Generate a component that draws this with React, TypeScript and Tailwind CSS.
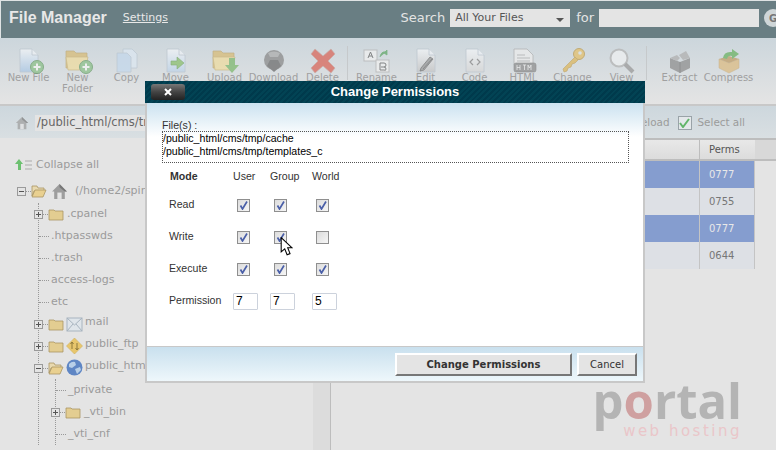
import React from 'react';

const verdana = "font-['DejaVu_Sans',sans-serif]";

function Page({ tint = '#a9c6e4', children }: { tint?: string; children?: React.ReactNode }) {
  return (
    <svg width="30" height="26" viewBox="0 0 30 26">
      <defs>
        <linearGradient id={`pg${tint.slice(1)}`} x1="0" y1="0" x2="0" y2="1">
          <stop offset="0" stopColor="#f4f6f8" />
          <stop offset="1" stopColor={tint} />
        </linearGradient>
      </defs>
      <path d="M6 1h12l6 6v17H6z" fill={`url(#pg${tint.slice(1)})`} stroke="#b8c2cb" strokeWidth="0.8" />
      <path d="M18 1v6h6" fill="#eef2f5" stroke="#b8c2cb" strokeWidth="0.8" />
      {children}
    </svg>
  );
}

function PlusBadge() {
  return (
    <g>
      <circle cx="23" cy="19" r="6.5" fill="#8cc08a" stroke="#6d9d6d" />
      <path d="M23 15.5v7M19.5 19h7" stroke="#f4f4f4" strokeWidth="2" />
    </g>
  );
}

function FolderIcon({ children }: { children?: React.ReactNode }) {
  return (
    <svg width="30" height="26" viewBox="0 0 30 26">
      <path d="M3 3h8l2 2h11v15H3z" fill="#d8bc78" stroke="#bba468" strokeWidth="0.7" />
      <path d="M3 9h22l-3 13H5z" fill="#efdca0" stroke="#c8b070" strokeWidth="0.7" />
      {children}
    </svg>
  );
}

const toolIcons: Record<string, React.ReactNode> = {
  newFile: <Page><PlusBadge /></Page>,
  newFolder: <FolderIcon><PlusBadge /></FolderIcon>,
  copy: (
    <svg width="30" height="26" viewBox="0 0 30 26">
      <path d="M11 1h9l5 5v14H11z" fill="#dce7f1" stroke="#b8c4cf" strokeWidth="0.8" />
      <path d="M5 5h10l4 4v15H5z" fill="#c4d8ec" stroke="#b8c4cf" strokeWidth="0.8" />
    </svg>
  ),
  move: <Page tint="#bcd2e8"><path d="M10 13h6v-4l7 6-7 6v-4h-6z" fill="#8cc070" stroke="#6d9d5c" strokeWidth="0.6" /></Page>,
  upload: <FolderIcon><path d="M19 10h6v7h4l-7 8-7-8h4z" fill="#7fb86f" /></FolderIcon>,
  download: (
    <svg width="30" height="26" viewBox="0 0 30 26">
      <circle cx="15" cy="12" r="10" fill="#8b8b8b" />
      <path d="M9 5q6-3 12 0l-2 4h-8z" fill="#adadad" />
      <path d="M8 18l3-6h8l3 6-7 6z" fill="#6e6e6e" />
    </svg>
  ),
  delete: (
    <svg width="30" height="26" viewBox="0 0 30 26">
      <path d="M7 1l8 7 8-7 4 5-7 7 7 7-4 5-8-7-8 7-4-5 7-7-7-7z" fill="#d9685c" stroke="#c4a09a" strokeWidth="0.7" />
    </svg>
  ),
  rename: (
    <svg width="30" height="26" viewBox="0 0 30 26">
      <rect x="2" y="2" width="13" height="11" fill="#f0f0f0" stroke="#b5b5b5" />
      <rect x="14" y="12" width="13" height="12" fill="#f0f0f0" stroke="#b5b5b5" />
      <path d="M6 10l2.500-6 2.500 6M7 8h3M18 15h4q2 0 2 2t-2 2q2 0 2 2t-2 1h-4zM19 19h3" fill="none" stroke="#666" strokeWidth="1" />
      <path d="M18 9q1-6 6-5M25 2v5l-3-2z" fill="#62a869" stroke="#62a869" strokeWidth="0.8" />
    </svg>
  ),
  edit: <Page tint="#c4c4c4"><path d="M10 20l9-11 3 2-9 11-4 1zM12 21l9-10" fill="#9a9a9a" stroke="#666" strokeWidth="0.8" /></Page>,
  code: <Page tint="#d6d6d6"><path d="M13 11l-3 3 3 3M17 11l3 3-3 3" fill="none" stroke="#888" strokeWidth="1.2" /></Page>,
  html: (
    <svg width="30" height="26" viewBox="0 0 30 26">
      <path d="M5 1h13l6 6v10H5z" fill="#ececec" stroke="#a8a8a8" strokeWidth="0.8" />
      <path d="M8 7h8M8 10h13M8 13h13" stroke="#b0b0b0" />
      <rect x="5" y="15" width="22" height="9" rx="2" fill="#8f8f8f" stroke="#777" strokeWidth="0.6" />
      <path d="M8 17v5M8 19.500h3M11 17v5M14 17h3M15.500 17v5M19 22v-5l1.500 3 1.500-3v5" stroke="#eee" strokeWidth="0.8" fill="none" />
    </svg>
  ),
  change: (
    <svg width="30" height="26" viewBox="0 0 30 26">
      <circle cx="21" cy="6" r="5.500" fill="#e4c06c" stroke="#bb9c54" />
      <circle cx="22" cy="5" r="1.800" fill="#dde3e6" />
      <path d="M17 9l-12 12 1 3 3-1 1-3 3-1 1-3 3-1 3-3z" fill="#dcb75f" stroke="#bb9c54" strokeWidth="0.7" />
    </svg>
  ),
  view: (
    <svg width="30" height="26" viewBox="0 0 30 26">
      <circle cx="12" cy="10" r="8.500" fill="#eef0f1" stroke="#b4b4b4" strokeWidth="2" />
      <path d="M18 16l8 8" stroke="#9a9a9a" strokeWidth="4" />
    </svg>
  ),
  extract: (
    <svg width="30" height="26" viewBox="0 0 30 26">
      <path d="M5 10l10 4 10-4v10l-10 5-10-5z" fill="#8f8f8f" />
      <path d="M5 10l7-3 3 3-3 3zM25 10l-4-7-7 4 4 5z" fill="#b0b0b0" />
      <path d="M15 14v11" stroke="#777" />
    </svg>
  ),
  compress: (
    <svg width="30" height="26" viewBox="0 0 30 26">
      <path d="M5 11l10 4 10-4v9l-10 5-10-5z" fill="#dcbc84" stroke="#c4a670" strokeWidth="0.5" />
      <path d="M5 11l10-3 10 3-10 4z" fill="#c09e68" />
      <path d="M9 10q1-7 9-6V1l7 5-7 5V8q-4-1-5 3z" fill="#6cb264" />
    </svg>
  ),
};

const tools = [
  { key: 'newFile', label: 'New File' },
  { key: 'newFolder', label: 'New Folder' },
  { key: 'copy', label: 'Copy' },
  { key: 'move', label: 'Move' },
  { key: 'upload', label: 'Upload' },
  { key: 'download', label: 'Download' },
  { key: 'delete', label: 'Delete' },
  { key: 'sep' },
  { key: 'rename', label: 'Rename' },
  { key: 'edit', label: 'Edit' },
  { key: 'code', label: 'Code' },
  { key: 'html', label: 'HTML' },
  { key: 'change', label: 'Change' },
  { key: 'view', label: 'View' },
  { key: 'sep2' },
  { key: 'extract', label: 'Extract' },
  { key: 'compress', label: 'Compress' },
];

function Toolbar() {
  return (
    <div className="flex h-[66px] shrink-0 items-start bg-gradient-to-b from-[#ccd6dc] to-[#e4e4e4] pl-1 pt-[10px]">
      {tools.map((t) =>
        t.label ? (
          <div key={t.key} className="flex w-[49px] shrink-0 flex-col items-center text-center text-[10px] leading-[11px] text-[#a0a0a0]">
            <div className="h-[24px] opacity-75">{toolIcons[t.key]}</div>
            <span className="whitespace-pre-line">{t.label === 'New Folder' ? 'New\nFolder' : t.label}</span>
          </div>
        ) : (
          <div key={t.key} className={`mt-[-2px] h-[34px] w-[1px] shrink-0 bg-[#c6c9cb] ${t.key === 'sep' ? 'mr-[4px]' : 'mr-[8px]'}`} />
        ),
      )}
    </div>
  );
}

function HomeIcon({ size = 16 }: { size?: number }) {
  return (
    <svg width={size} height={size} viewBox="0 0 16 16" className="shrink-0">
      <path d="M8 1L1 8h2v7h10V8h2z" fill="#9d9d9d" />
      <path d="M8 1l7 7h-2L8 4z" fill="#777" />
      <rect x="6" y="9" width="4" height="6" fill="#e4e4e4" />
    </svg>
  );
}

function TreeFolder({ open }: { open?: boolean }) {
  return (
    <svg width="16" height="13" viewBox="0 0 16 13" className="shrink-0">
      {open ? (
        <>
          <path d="M1 1h5l1 2h6v3H3L1 11z" fill="#e8d9b0" stroke="#a99563" strokeWidth="0.8" />
          <path d="M1 12l3-7h11l-3 7z" fill="#e9d090" stroke="#a99563" strokeWidth="0.8" />
        </>
      ) : (
        <path d="M1 2h5l1 1h8v9H1z" fill="#e3cd91" stroke="#a99563" strokeWidth="0.8" />
      )}
    </svg>
  );
}

function Expander({ open }: { open?: boolean }) {
  return (
    <span className="relative flex h-[9px] w-[9px] shrink-0 items-center justify-center border border-[#9a9a9a] bg-[#e4e4e4]">
      <span className="h-[1px] w-[5px] bg-[#555]" />
      {!open && <span className="absolute h-[5px] w-[1px] bg-[#555]" />}
    </span>
  );
}

const treeBadges: Record<string, React.ReactNode> = {
  mail: (
    <svg width="17" height="16" viewBox="0 0 17 16" className="shrink-0">
      <rect x="1" y="2" width="15" height="13" fill="#dfe5ea" stroke="#a8b4bf" />
      <path d="M1 2l7.500 7L16 2M1 15l6-7M16 15l-6-7" fill="none" stroke="#a8b4bf" />
    </svg>
  ),
  ftp: (
    <svg width="17" height="16" viewBox="0 0 17 16" className="shrink-0">
      <path d="M8.500 0l8 8-8 8-8-8z" fill="#e8c66c" stroke="#cfae5c" strokeWidth="0.6" />
      <path d="M6 4v7M4.500 6L6 4l1.500 2M11 12V5M9.500 10l1.500 2 1.500-2" fill="none" stroke="#8e7a3c" />
    </svg>
  ),
  globe: (
    <svg width="17" height="17" viewBox="0 0 17 17" className="shrink-0">
      <circle cx="8.500" cy="8.500" r="8" fill="#5f86c4" />
      <path d="M3 5q3-3 6-2l1 3-4 3-3-1zM9 10l5-2 1 3-4 4z" fill="#b8cfe8" />
    </svg>
  ),
};

type Row = { name: string; kind: 'file' | 'folder' | 'open'; badge?: string };

const level1: Row[] = [
  { name: '.cpanel', kind: 'folder' },
  { name: '.htpasswds', kind: 'file' },
  { name: '.trash', kind: 'file' },
  { name: 'access-logs', kind: 'file' },
  { name: 'etc', kind: 'file' },
  { name: 'mail', kind: 'folder', badge: 'mail' },
  { name: 'public_ftp', kind: 'folder', badge: 'ftp' },
  { name: 'public_html', kind: 'open', badge: 'globe' },
];

const level2: Row[] = [
  { name: '_private', kind: 'file' },
  { name: '_vti_bin', kind: 'folder' },
  { name: '_vti_cnf', kind: 'file' },
];

function TreeRow({ row }: { row: Row }) {
  return (
    <div className="flex h-[22px] items-center whitespace-nowrap">
      {row.kind === 'file' ? (
        <span className="ml-[5px] mr-[2px] w-[10px] shrink-0 border-t border-dotted border-[#999]" />
      ) : (
        <>
          <Expander open={row.kind === 'open'} />
          <span className="w-[5px] shrink-0 border-t border-dotted border-[#999]" />
          <TreeFolder open={row.kind === 'open'} />
        </>
      )}
      {row.badge ? <span className="mb-[1px] ml-[2px]">{treeBadges[row.badge]}</span> : null}
      <span className={row.kind === 'file' ? '' : row.badge ? 'mb-[3px] ml-[2px]' : 'ml-[3px]'}>{row.name}</span>
    </div>
  );
}

function Tree() {
  return (
    <div className="w-[313px] shrink-0 overflow-hidden pl-[17px] pt-[18px] text-[11px] text-[#9b9b9b]">
      <div className="ml-[-2px] flex h-[18px] items-center gap-[3px]">
        <svg width="18" height="12" viewBox="0 0 18 12">
          <path d="M4 0l4 5H6v6H3V5H0z" fill="#6cc070" />
          <path d="M10 2h7M10 6h7M10 10h7" stroke="#aaa" />
        </svg>
        <span>Collapse all</span>
      </div>
      <div className="mt-[6px] flex h-[22px] items-center whitespace-nowrap">
        <Expander open />
        <span className="w-[5px] shrink-0 border-t border-dotted border-[#999]" />
        <TreeFolder open />
        <span className="ml-[4px]"><HomeIcon size={17} /></span>
        <span className="ml-[7px]">(/home2/spinning)</span>
      </div>
      <div className="ml-[21px] mt-[1px] border-l border-dotted border-[#999]">
        <div className="ml-[-5px]">
          {level1.map((r) => (
            <TreeRow key={r.name} row={r} />
          ))}
          <div className="ml-[21px] border-l border-dotted border-[#999]">
            <div className="ml-[-5px]">
              {level2.map((r) => (
                <TreeRow key={r.name} row={r} />
              ))}
            </div>
          </div>
        </div>
      </div>
    </div>
  );
}

const fileRows = [
  { perms: '0777', selected: true },
  { perms: '0755', selected: false },
  { perms: '0777', selected: true },
  { perms: '0644', selected: false },
];

function FileTable() {
  return (
    <div className="flex min-w-0 flex-1 border-l border-[#bdbdbd]">
      <div className="min-w-0 flex-1 border-t-2 border-[#bdbdbd]">
        <div className="flex h-[21px] border-b-2 border-[#bdbdbd] bg-gradient-to-b from-[#e8e8e8] to-[#dcdcdc] text-[10px] text-[#555]">
          <div className="flex-1" />
          <div className="flex w-[56px] items-center border-l border-[#bdbdbd] pl-[9px]">Perms</div>
          <div className="w-[21px] bg-[#d8d8d8]" />
        </div>
        {fileRows.map((r, i) => (
          <div key={i} className="flex h-[27px]">
            <div className={`flex-1 ${r.selected ? 'bg-[#859dcf]' : 'bg-[#dde0e5]'}`} />
            <div className={`flex w-[56px] items-center border-l border-r border-[#c4c4c4] pl-[9px] text-[10px] ${r.selected ? 'bg-[#859dcf] text-[#e8e8e8]' : 'bg-[#dde0e5] text-[#777]'}`}>
              {r.perms}
            </div>
            <div className="w-[21px]" />
          </div>
        ))}
      </div>
    </div>
  );
}

function Checkbox({ checked = true }: { checked?: boolean }) {
  return (
    <span className="ml-1 flex h-[13px] w-[13px] items-center justify-center border border-[#8f8f8f] bg-gradient-to-br from-[#dcdcdc] to-[#f6f6f6]">
      {checked && (
        <svg width="9" height="9" viewBox="0 0 9 9">
          <path d="M1.500 4.500L3.500 8 8 0.500" fill="none" stroke="#4a5fa8" strokeWidth="1.700" />
        </svg>
      )}
    </span>
  );
}

const modes = [
  { name: 'Read', values: [true, true, true] },
  { name: 'Write', values: [true, true, false] },
  { name: 'Execute', values: [true, true, true] },
];

function PermissionsDialog() {
  return (
    <div className="absolute left-[145px] top-[81px] flex h-[302px] w-[500px] flex-col font-['Liberation_Sans',sans-serif]">
      <div className="relative flex h-[22px] shrink-0 items-center justify-center bg-[repeating-linear-gradient(135deg,#003a4c_0px,#003a4c_2px,#024354_2px,#024354_4px)]">
        <button className="absolute left-[6px] top-[3px] flex h-[16px] w-[34px] items-center justify-center rounded-[3px] bg-gradient-to-b from-[#777] via-[#444] to-[#222]">
          <svg width="8" height="8" viewBox="0 0 8 8">
            <path d="M1 1l6 6M7 1L1 7" stroke="#fff" strokeWidth="2" />
          </svg>
        </button>
        <span className="text-[13px] font-bold text-white">Change Permissions</span>
      </div>
      <div className="flex min-h-0 flex-1 flex-col border-x-2 border-b-2 border-[#c8c8c8]">
        <div className="h-[243px] shrink-0 bg-gradient-to-b from-[#cbe2f0] via-white via-[14%] to-white pl-[15px] pr-[14px] pt-[16px] text-[10.6px] text-[#333]">
          <div className="leading-[12px]">File(s) :</div>
          <div className="h-[32px] border border-dotted border-[#555] leading-[13px] text-black">
            <div>/public_html/cms/tmp/cache</div>
            <div>/public_html/cms/tmp/templates_c</div>
          </div>
          <div className="ml-[7px] grid grid-cols-[64px_37px_42px_37px] grid-rows-[26px_32px_32px_32px_32px] items-center">
            <b className="ml-[1px] mt-[2px] font-bold">Mode</b>
            <span className="mt-[2px]">User</span>
            <span className="mt-[2px]">Group</span>
            <span className="mt-[2px]">World</span>
            {modes.map((m) => (
              <React.Fragment key={m.name}>
                <span className="mb-[1px]">{m.name}</span>
                {m.values.map((v, i) => (
                  <Checkbox key={i} checked={v} />
                ))}
              </React.Fragment>
            ))}
            <span className="mb-[1px]">Permission</span>
            {['7', '7', '5'].map((v, i) => (
              <span key={i} className="flex h-[17px] w-[25px] items-center rounded-[1px] border border-[#ccd2dc] bg-white pl-[2px] text-[12px] text-black">
                {v}
              </span>
            ))}
          </div>
        </div>
        <div className="flex flex-1 items-start justify-end gap-[5px] border-t border-[#c8c8c8] bg-gradient-to-b from-[#c9e0ee] to-[#eef7fb] pr-[6px] pt-[6px]">
          <button className={`${verdana} h-[23px] w-[177px] border-2 border-b-[#777] border-l-white border-r-[#777] border-t-white bg-[#e4e4e4] text-[10px] font-bold text-[#333]`}>
            Change Permissions
          </button>
          <button className={`${verdana} h-[23px] w-[60px] border-2 border-b-[#777] border-l-white border-r-[#777] border-t-white bg-[#e4e4e4] text-[10px] text-[#333]`}>
            Cancel
          </button>
        </div>
      </div>
    </div>
  );
}

export default function App() {
  return (
    <div className={`${verdana} relative flex h-[450px] w-[776px] flex-col overflow-hidden bg-[#e4e4e4]`}>
      <header className="flex h-[38px] shrink-0 items-center border-l border-t border-[#dfe3e4] bg-[#697e83] pb-[3px] pl-[8px]">
        <h1 className="shrink-0 whitespace-nowrap font-['Liberation_Sans',sans-serif] text-[16px] font-bold text-[#e8e8e8]">File Manager</h1>
        <a className="ml-[16px] shrink-0 text-[11px] text-[#e8e8e8] underline">Settings</a>
        <div className="ml-auto mr-[-6px] flex shrink-0 items-center">
          <span className="text-[13px] text-[#e4e4e4]">Search</span>
          <div className="ml-[5px] flex h-[18px] w-[120px] shrink-0 items-center justify-between bg-[#e4e4e4] pl-[5px] pr-[6px] text-[11px] text-[#555]">
            All Your Files
            <span className="mt-[3px] h-0 w-0 border-x-[4px] border-t-[4px] border-x-transparent border-t-[#555]" />
          </div>
          <span className="ml-[6px] text-[13px] text-[#e4e4e4]">for</span>
          <div className="ml-[5px] h-[18px] w-[160px] shrink-0 bg-[#e4e4e4]" />
          <span className="ml-[5px] flex h-[18px] w-[18px] shrink-0 items-center justify-center rounded-full bg-[#cfd6d8] text-[10px] font-bold text-[#777]">G</span>
        </div>
      </header>
      <Toolbar />
      <div className="flex h-[34px] shrink-0 items-center border-t-2 border-[#c8c8c8] bg-gradient-to-b from-[#cdd7dd] to-[#d9dfe2] pt-[1px] pl-[15px] text-[#9b9b9b]">
        <span className="opacity-70"><HomeIcon size={14} /></span>
        <div className="ml-[6px] flex h-[16px] w-[300px] shrink-0 items-center bg-[#e4e4e4] pl-[2px] text-[11.5px] text-[#666]">/public_html/cms/tmp</div>
        <span className="ml-auto text-[10.4px]">Reload</span>
        <span className="ml-[8px] flex h-[14px] w-[14px] shrink-0 items-center justify-center border border-[#9aa3a8] bg-[#e4e8ea]">
          <svg width="11" height="10" viewBox="0 0 11 10">
            <path d="M1 5l3 4 6-8" fill="none" stroke="#62b56a" strokeWidth="2" />
          </svg>
        </span>
        <span className="ml-[6px] mr-[31px] text-[10.4px]">Select all</span>
      </div>
      <main className="flex min-h-0 flex-1">
        <Tree />
        <div className="w-[17px] shrink-0 bg-[#dcdcdc]" />
        <FileTable />
      </main>
      <PermissionsDialog />
      <svg width="13" height="19" viewBox="0 0 11 16" className="absolute left-[280px] top-[237px]">
        <path d="M1 0.500v12l3-2.500 2 5 2.500-1-2-5H10z" fill="#fff" stroke="#000" strokeWidth="0.9" />
      </svg>
      <div className="absolute left-[599px] top-[379px] flex w-[143px] flex-col items-end whitespace-nowrap">
        <span className="h-[44px] font-['Open_Sans',sans-serif] text-[49px] font-bold leading-[42px] tracking-[0px] text-[#b4b4b4]">
          p<span className="text-[#cfa0a0]">o</span>rtal
        </span>
        <span className="text-[15px] leading-[17px] tracking-[2.5px] text-[#eac6c9]">web hosting</span>
      </div>
    </div>
  );
}
